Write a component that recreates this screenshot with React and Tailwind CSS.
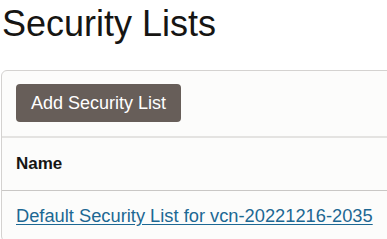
export default function App() {
  return (
    <div className="min-h-screen bg-white overflow-hidden" style={{ fontFamily: '"Liberation Sans", Arial, sans-serif' }}>
      <h1 className="pl-[2px] pt-[3px] text-[36px] leading-[41px] text-[#161513] font-normal">
        Security Lists
      </h1>

      {/* panel runs past the right edge of the window */}
      <div className="mt-[26px] ml-[1px] w-[420px] border border-[#d4d2d0] rounded-[6px] bg-[#fcfcfb]">
        <div className="px-[14px] pt-[13px] pb-[14px] border-b-2 border-[#e4e3e1]">
          <button className="h-[38px] px-[15px] rounded-[4px] bg-[#675e59] text-white text-[18px] leading-[38px]">
            Add Security List
          </button>
        </div>

        <div className="h-[53px] flex items-center px-[14px] border-b border-[#c9c7c5]">
          <span className="text-[17px] font-bold text-[#161513]">Name</span>
        </div>

        <div className="h-[50px] flex items-center px-[14px]">
          <a href="#" className="text-[18.3px] text-[#1d6893] underline underline-offset-[2px]">
            Default Security List for vcn-20221216-2035
          </a>
        </div>
      </div>
    </div>
  );
}
